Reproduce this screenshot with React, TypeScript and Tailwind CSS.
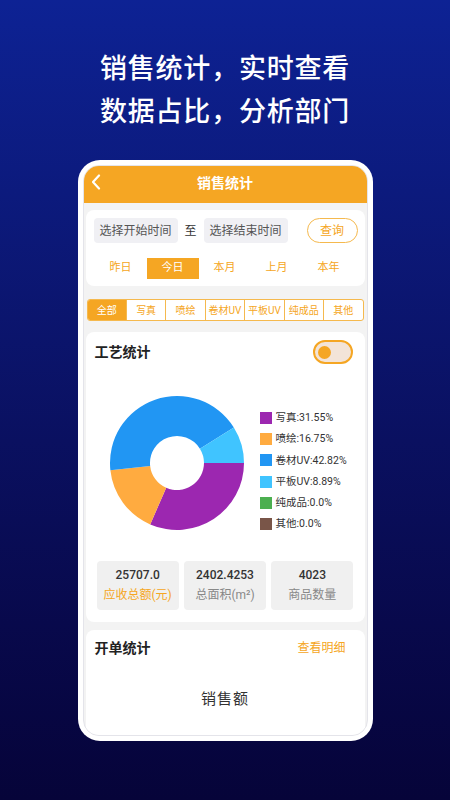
import React from 'react';

const ORANGE = '#f5a623';

const slices = [
  { name: '写真', value: 31.55, color: '#9c27b0' },
  { name: '喷绘', value: 16.75, color: '#ffab40' },
  { name: '卷材UV', value: 42.82, color: '#2196f3' },
  { name: '平板UV', value: 8.89, color: '#40c4ff' },
  { name: '纯成品', value: 0.0, color: '#4caf50' },
  { name: '其他', value: 0.0, color: '#795548' },
];

function arcPath(cx: number, cy: number, r0: number, r1: number, a0: number, a1: number) {
  const p = (r: number, a: number) => [cx + r * Math.cos(a), cy + r * Math.sin(a)];
  const [x0, y0] = p(r1, a0);
  const [x1, y1] = p(r1, a1);
  const [x2, y2] = p(r0, a1);
  const [x3, y3] = p(r0, a0);
  const large = a1 - a0 > Math.PI ? 1 : 0;
  return `M${x0} ${y0} A${r1} ${r1} 0 ${large} 1 ${x1} ${y1} L${x2} ${y2} A${r0} ${r0} 0 ${large} 0 ${x3} ${y3} Z`;
}

function Donut() {
  const total = slices.reduce((s, x) => s + x.value, 0);
  let start = 0;
  return (
    <svg width="140" height="140" viewBox="0 0 140 140">
      {slices
        .filter((s) => s.value > 0)
        .map((s) => {
          const a0 = start;
          const a1 = start + (s.value / total) * Math.PI * 2;
          start = a1;
          return <path key={s.name} d={arcPath(70, 70, 27, 67, a0, a1)} fill={s.color} />;
        })}
    </svg>
  );
}

export default function App() {
  const periods = ['昨日', '今日', '本月', '上月', '本年'];
  const cats = ['全部', '写真', '喷绘', '卷材UV', '平板UV', '纯成品', '其他'];

  return (
    <div
      className="h-[800px] w-[450px] overflow-hidden bg-gradient-to-b from-[#0d2294] to-[#060439] flex flex-col items-center"
      style={{ fontFamily: 'Roboto, "Noto Sans CJK SC", sans-serif' }}
    >
      {/* Headline */}
      <div className="pt-[48px] text-center text-white text-[27px] leading-[43px] font-medium tracking-[0.8px]">
        <div>销售统计，实时查看</div>
        <div>数据占比，分析部门</div>
      </div>

      {/* Phone frame */}
      <div className="mt-[26px] w-[295px] h-[581px] rounded-[22px] bg-white p-[5px]">
        <div className="h-full rounded-[16px] overflow-hidden bg-[#f3f3f3] flex flex-col border border-[#e4e4ea]">
          {/* Title bar */}
          <div className="h-[37px] shrink-0 relative flex items-center justify-center pb-[3px]" style={{ background: ORANGE }}>
            <svg className="absolute left-[6px] top-[8px]" width="12" height="16" viewBox="0 0 12 16">
              <path d="M9 1.5 L3 8 L9 14.5" fill="none" stroke="white" strokeWidth="2.2" strokeLinecap="round" strokeLinejoin="round" />
            </svg>
            <span className="text-white text-[14px] font-bold">销售统计</span>
          </div>

          <div className="px-[2px] flex flex-col">
            {/* Date card */}
            <div className="mt-[7px] bg-white rounded-[8px] pt-[8px] pb-[7px] px-[8px]">
              <div className="flex items-center">
                <div className="w-[84px] h-[25px] rounded-[4px] bg-[#f0f0f4] text-[12px] text-[#555] flex items-center justify-center">
                  选择开始时间
                </div>
                <span className="mx-[7px] text-[12px] text-[#333]">至</span>
                <div className="w-[84px] h-[25px] rounded-[4px] bg-[#f0f0f4] text-[12px] text-[#555] flex items-center justify-center">
                  选择结束时间
                </div>
                <div className="ml-auto mr-[-1px] w-[51px] h-[25px] rounded-full border border-[#f5b94e] text-[12px] text-[#f5a623] flex items-center justify-center">
                  查询
                </div>
              </div>
              <div className="mt-[15px] flex pl-[1px]">
                {periods.map((p) => (
                  <div
                    key={p}
                    className={`w-[52px] h-[21px] flex items-center justify-center text-[11px] ${
                      p === '今日' ? 'bg-[#f5a623] text-white' : 'text-[#f5a623]'
                    }`}
                  >
                    {p}
                  </div>
                ))}
              </div>
            </div>

            {/* Category tabs */}
            <div className="mt-[13px] mx-[1px] h-[22px] flex rounded-[3px] border border-[#f5b94e] overflow-hidden bg-white">
              {cats.map((c, i) => (
                <div
                  key={c}
                  className={`flex-1 flex items-center justify-center text-[10px] ${
                    i > 0 ? 'border-l border-[#f5b94e]' : ''
                  } ${i === 0 ? 'bg-[#f5a623] text-white' : 'text-[#f5a623]'}`}
                >
                  {c}
                </div>
              ))}
            </div>

            {/* Craft stats card */}
            <div className="mt-[11px] bg-white rounded-[8px] pt-[8px] pb-[12px]">
              <div className="h-[24px] flex items-center justify-between pl-[9px] pr-[12px]">
                <span className="text-[14px] font-bold text-[#222]">工艺统计</span>
                <div className="w-[40px] h-[24px] rounded-full border-2 border-[#f5a623] bg-[#f3e4d8] flex items-center pl-[3px]">
                  <div className="w-[13px] h-[13px] rounded-full bg-[#f5a623]" />
                </div>
              </div>

              <div className="mt-[29px] flex items-start pl-[21px]">
                <Donut />
                <div className="ml-[13px] mt-[19px] flex flex-col gap-[9.2px]">
                  {slices.map((s) => (
                    <div key={s.name} className="flex items-center h-[12px]">
                      <div className="w-[12px] h-[12px]" style={{ background: s.color }} />
                      <span className="ml-[4px] text-[10.5px] text-[#333] whitespace-nowrap">
                        {s.name}:{s.value === 0 ? '0.0' : s.value.toFixed(2)}%
                      </span>
                    </div>
                  ))}
                </div>
              </div>

              <div className="mt-[28px] px-[11px] flex gap-[5px]">
                {[
                  { v: '25707.0', l: '应收总额(元)', hl: true },
                  { v: '2402.4253', l: '总面积(m²)', hl: false },
                  { v: '4023', l: '商品数量', hl: false },
                ].map((s) => (
                  <div key={s.l} className="flex-1 h-[49px] rounded-[4px] bg-[#f0f0f0] flex flex-col items-center justify-center">
                    <span className="text-[12px] leading-[17px] font-medium text-[#333]">{s.v}</span>
                    <span className={`mt-[3px] text-[12px] leading-[17px] ${s.hl ? 'text-[#f5a623]' : 'text-[#888]'}`}>{s.l}</span>
                  </div>
                ))}
              </div>
            </div>

            {/* Order stats card */}
            <div className="mt-[8px] bg-white rounded-[8px] h-[130px] pt-[8px]">
              <div className="h-[20px] flex items-center justify-between pl-[9px] pr-[19px]">
                <span className="text-[14px] font-bold text-[#222]">开单统计</span>
                <span className="text-[12px] text-[#f5a623]">查看明细</span>
              </div>
              <div className="mt-[30px] text-center text-[15px] text-[#333] tracking-[1px]">销售额</div>
            </div>
          </div>
        </div>
      </div>
    </div>
  );
}
